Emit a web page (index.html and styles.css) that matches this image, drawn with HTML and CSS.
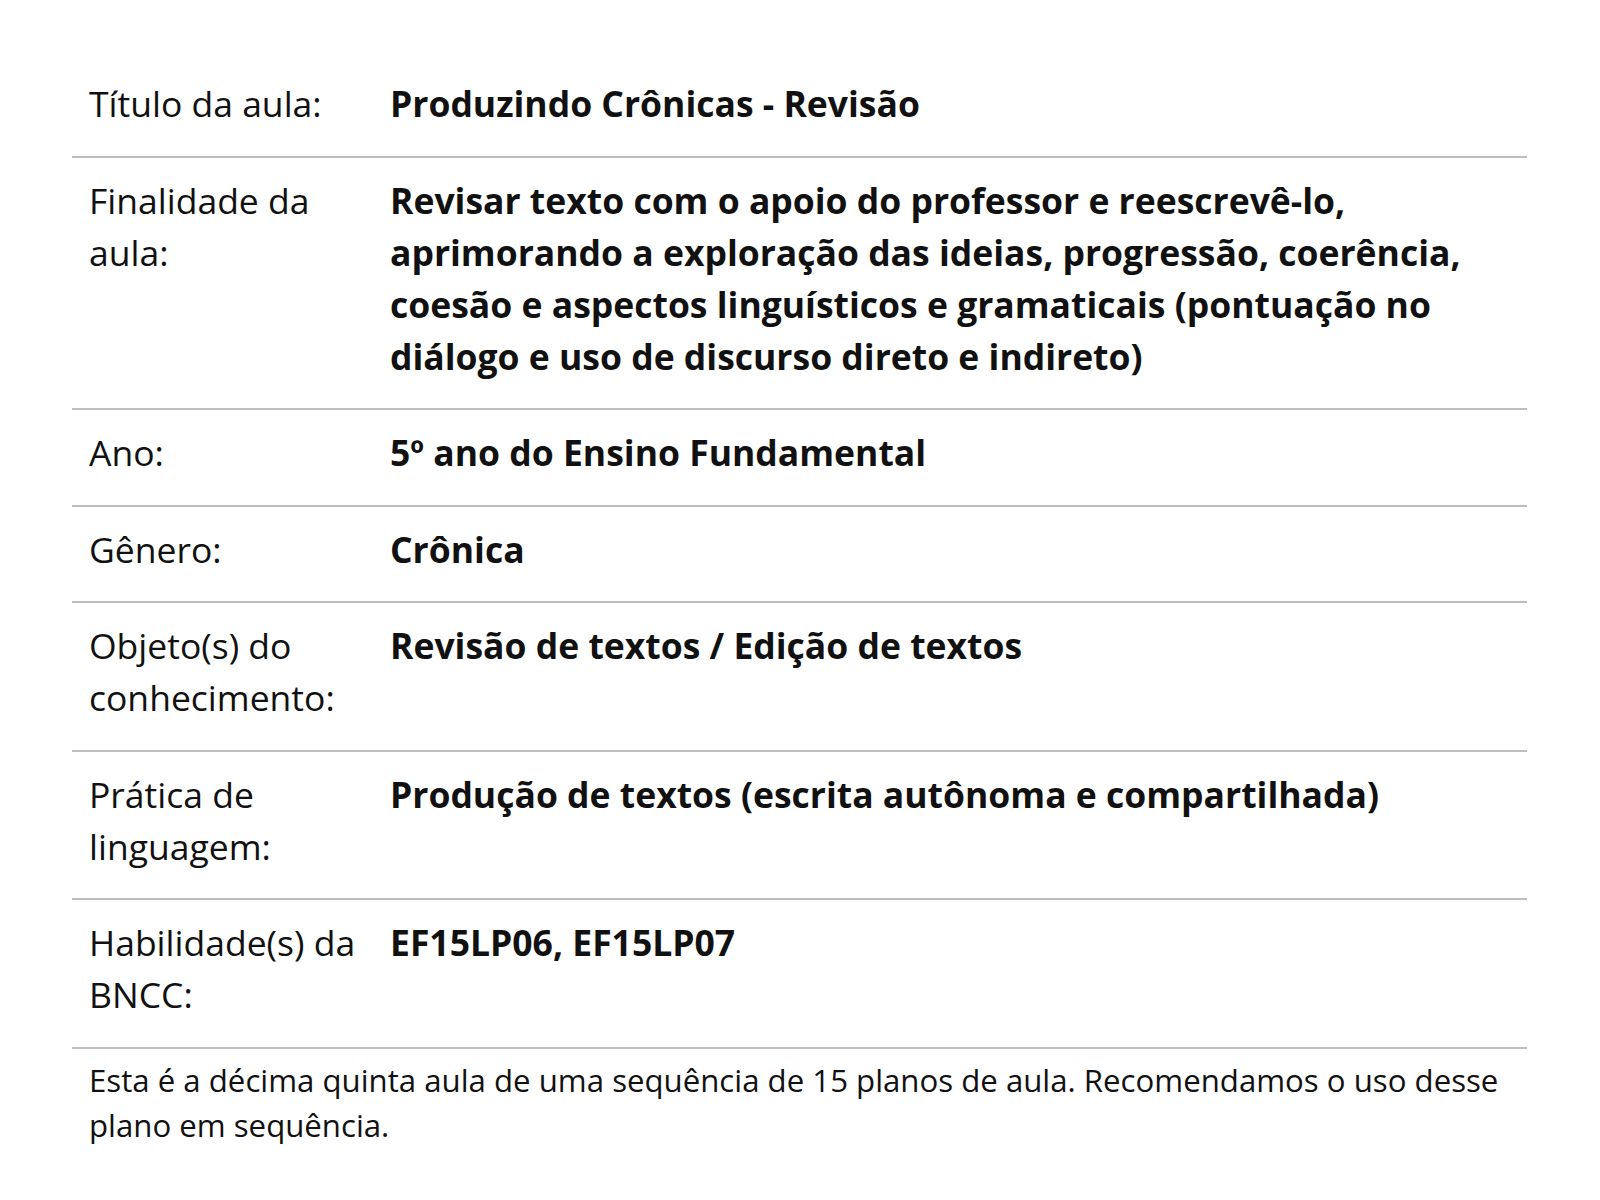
FILE: index.html
```html
<!DOCTYPE html>
<html lang="pt-BR">
<head>
<meta charset="utf-8">
<title>Produzindo Crônicas - Revisão</title>
<link rel="stylesheet" href="styles.css">
</head>
<body>
<main class="plan">
  <div class="row">
    <div class="label">Título da aula:</div>
    <div class="value">Produzindo Crônicas - Revisão</div>
  </div>
  <div class="row">
    <div class="label">Finalidade da aula:</div>
    <div class="value">Revisar texto com o apoio do professor e reescrevê-lo, aprimorando a exploração das ideias, progressão, coerência, coesão e aspectos linguísticos e gramaticais (pontuação no diálogo e uso de discurso direto e indireto)</div>
  </div>
  <div class="row">
    <div class="label">Ano:</div>
    <div class="value">5º ano do Ensino Fundamental</div>
  </div>
  <div class="row">
    <div class="label">Gênero:</div>
    <div class="value">Crônica</div>
  </div>
  <div class="row">
    <div class="label">Objeto(s) do conhecimento:</div>
    <div class="value">Revisão de textos / Edição de textos</div>
  </div>
  <div class="row">
    <div class="label">Prática de linguagem:</div>
    <div class="value">Produção de textos (escrita autônoma e compartilhada)</div>
  </div>
  <div class="row">
    <div class="label">Habilidade(s) da BNCC:</div>
    <div class="value">EF15LP06, EF15LP07</div>
  </div>
  <p class="note">Esta é a décima quinta aula de uma sequência de 15 planos de aula. Recomendamos o uso desse plano em sequência.</p>
</main>
</body>
</html>
```
FILE: styles.css
```css
html, body {
  margin: 0;
  padding: 0;
  background: #ffffff;
}
body {
  font-family: "Open Sans", "Noto Sans", sans-serif;
  color: #111111;
  padding: 61px 73px 0 72px;
}
.plan {
  display: flex;
  flex-direction: column;
}
.row {
  display: grid;
  grid-template-columns: 300px 1fr;
  border-bottom: 2px solid #bdbdbd;
  padding: 16px 0 26.5px 0;
  font-size: 35.5px;
  line-height: 52px;
}
.label {
  font-weight: 400;
  padding: 0 4px 0 17px;
}
.value {
  font-weight: 700;
  padding: 0 16px 0 18px;
}
.note {
  margin: 0;
  padding: 9px 16px 0 17px;
  font-size: 31.2px;
  line-height: 45px;
}
```
